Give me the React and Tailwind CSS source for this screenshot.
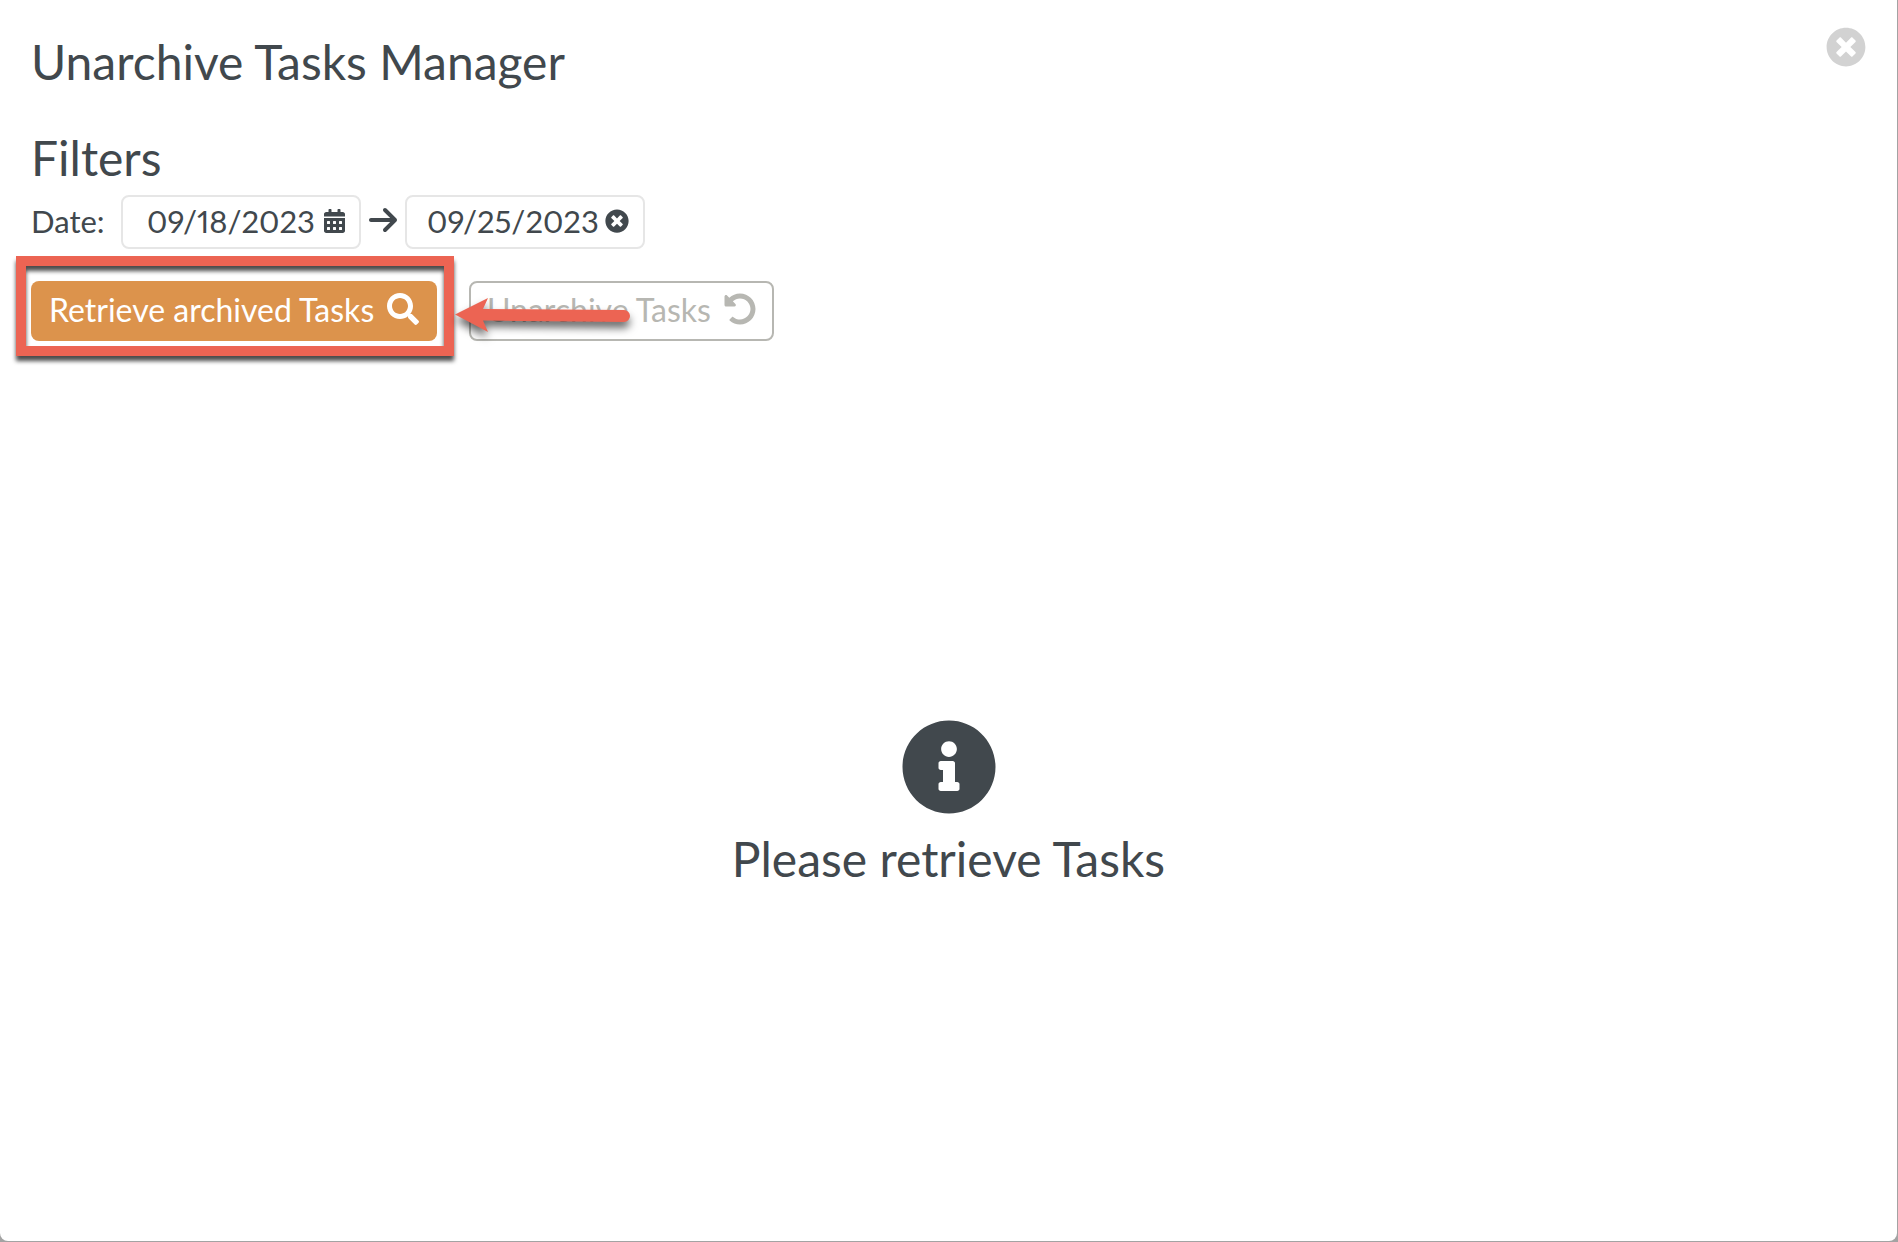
import React from "react";
import {
  FaCalendarAlt,
  FaInfoCircle,
  FaSearch,
  FaTimesCircle,
  FaUndoAlt,
} from "react-icons/fa";
import { FaArrowRight } from "react-icons/fa6";

const DateField = ({ id, label, value, icon, className }) => {
  return (
    <div className="flex h-[54px] w-60 items-center rounded-lg border-2 border-[#e6e6e6] bg-white pr-3.5 pb-0.5 pl-5">
      <input
        id={id}
        aria-label={label}
        defaultValue={value}
        className={`min-w-0 flex-1 bg-transparent proportional-nums outline-none ${className}`}
      />
      {icon}
    </div>
  );
};

const PointerArrow = () => {
  return (
    <svg
      viewBox="0 0 180 48"
      className="pointer-events-none absolute top-[10px] -left-[15px] h-12 w-[180px] overflow-visible drop-shadow-[0_6px_4px_rgba(0,0,0,0.6)]"
      aria-hidden="true"
    >
      <path
        d="M1 23.500 L34 7 L29 18 L170 19 A6 6 0 0 1 170 31 L29 29.500 L34 41 Z"
        fill="#ec6453"
      />
    </svg>
  );
};

const App = () => {
  return (
    <div className="min-h-screen bg-[#a3a3a3] font-['Lato','Open_Sans',sans-serif] text-[#41484d]">
      <div className="border-r border-b border-[#a3a3a3]">
        <main className="flex min-h-[calc(100vh-1px)] flex-col rounded-b-lg bg-white px-[31px] pt-[27px] pb-8">
          <header className="flex items-start justify-between">
            <h1 className="pt-[7px] text-[48px] leading-[56px]">
              Unarchive Tasks Manager
            </h1>
            <button type="button" aria-label="Close" className="text-[#d2d2d2]">
              <FaTimesCircle className="h-10 w-10" />
            </button>
          </header>

          <section className="pt-10">
            <h2 className="text-[48px] leading-[56px]">Filters</h2>
            <div className="mt-[9px] flex items-center text-[31px]">
              <label htmlFor="from" className="w-[90px] pb-0.5">
                Date:
              </label>
              <DateField
                id="from"
                label="From date"
                value="09/18/2023"
                className="pl-1"
                icon={<FaCalendarAlt className="h-6 w-[21px]" />}
              />
              <FaArrowRight className="mx-2 mb-1 h-8 w-7" />
              <DateField
                id="to"
                label="To date"
                value="09/25/2023"
                icon={<FaTimesCircle className="h-6 w-6" />}
              />
            </div>

            <div className="mt-8 flex items-center gap-8 text-[32px]">
              <div className="relative">
                <button
                  type="button"
                  className="flex h-[60px] w-[406px] items-center justify-between rounded-lg bg-[#dc934c] px-[18px] pb-0.5 whitespace-nowrap text-white"
                >
                  Retrieve archived Tasks
                  <FaSearch className="mb-0.5 h-8 w-8" />
                </button>
                <div className="pointer-events-none absolute -top-[25px] -right-[17px] -bottom-[15px] -left-[15px] border-10 border-[#ec6453] drop-shadow-[0_5px_2px_rgba(0,0,0,0.7)]" />
              </div>
              <div className="relative">
                <button
                  type="button"
                  disabled
                  className="flex h-[60px] w-[305px] items-center justify-between rounded-lg border-2 border-[#b7b7b2] px-4 pb-0.5 whitespace-nowrap text-[#b7b7b2]"
                >
                  Unarchive Tasks
                  <FaUndoAlt className="mb-0.5 h-8 w-8" />
                </button>
                <PointerArrow />
              </div>
            </div>
          </section>

          <section className="flex flex-1 flex-col items-center justify-center pt-14">
            <FaInfoCircle className="h-24 w-24" />
            <p className="mt-4 text-[48px] leading-[56px]">
              Please retrieve Tasks
            </p>
          </section>
        </main>
      </div>
    </div>
  );
};

export default App;
